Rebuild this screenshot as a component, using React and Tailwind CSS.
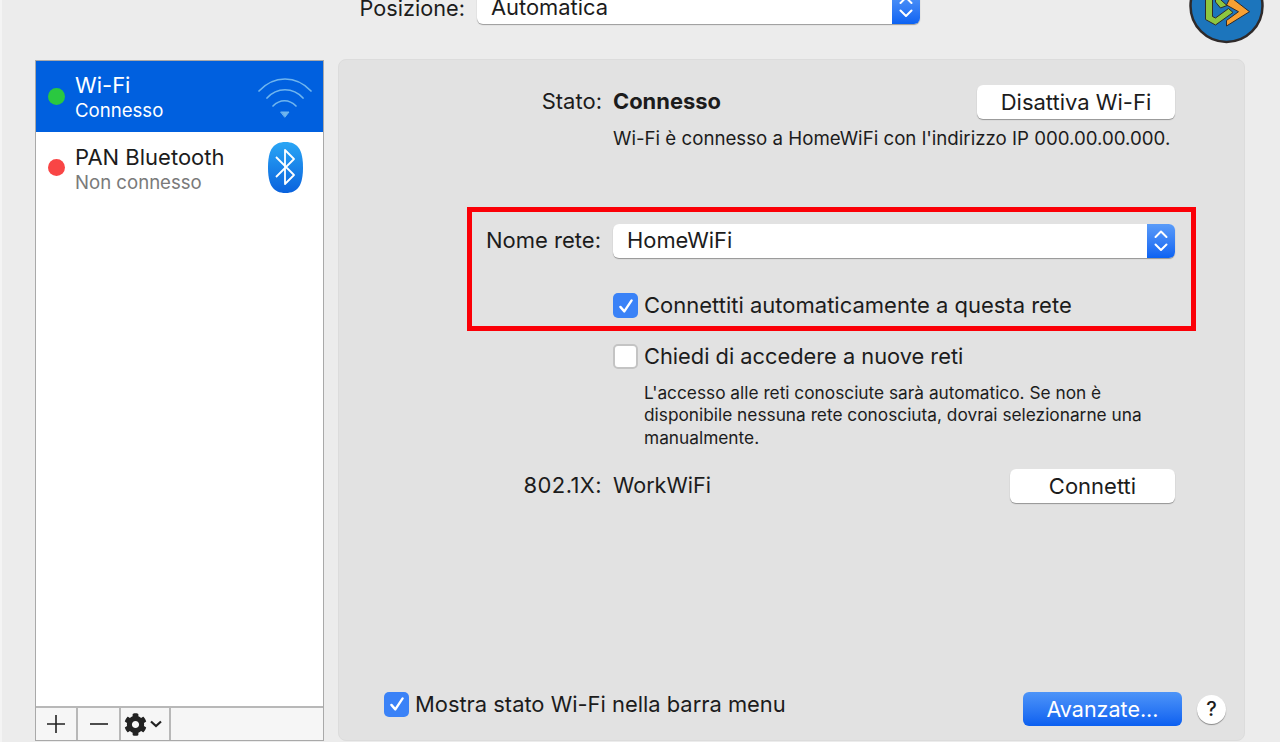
import React from "react";
import { FaCog } from "react-icons/fa";

const Check = ({ size = 18 }) => (
  <svg width={size} height={size} viewBox="0 0 16 16" fill="none">
    <path d="M3 8.8 L6.5 12.8 L13 3" stroke="#fff" strokeWidth="2.1" strokeLinecap="round" strokeLinejoin="round" />
  </svg>
);

const Checkbox = ({ checked }) =>
  checked ? (
    <div className="w-[25px] h-[25px] shrink-0 rounded-[5px] bg-[#3a82f7] flex items-center justify-center">
      <Check />
    </div>
  ) : (
    <div className="w-[25px] h-[25px] shrink-0 rounded-[5px] bg-white border-2 border-[#c4c4c4]" />
  );

const Stepper = () => (
  <div className="w-[28px] h-[34px] shrink-0 rounded-r-[6px] bg-gradient-to-b from-[#5a9bf8] to-[#0a62f2] flex items-center justify-center">
    <svg width="14" height="24" viewBox="0 0 14 24" fill="none">
      <path d="M1.5 8 L7 2.5 L12.5 8 M1.5 15.5 L7 21 L12.5 15.5" stroke="#fff" strokeWidth="2" strokeLinecap="round" strokeLinejoin="round" />
    </svg>
  </div>
);

const Select = ({ label, className = "", textClass }) => (
  <div className={`flex h-[34px] rounded-[6px] bg-white shadow-[0_1px_1px_rgba(0,0,0,0.35)] ${className}`}>
    <div className={`flex-1 flex items-center text-[21.9px] leading-[28px] text-[#1c1c1c] ${textClass}`}>{label}</div>
    <Stepper />
  </div>
);

const Button = ({ children, className }) => (
  <div className={`h-[34px] rounded-[6px] bg-white shadow-[0_1px_1px_rgba(0,0,0,0.35)] flex items-center justify-center text-[22px] leading-[28px] pb-px text-[#1c1c1c] ${className}`}>
    {children}
  </div>
);

const Logo = () => (
  <svg className="shrink-0 -mt-[31px] mr-[16px]" width="75" height="75" viewBox="1188.5 -31 75 75">
    <circle cx="1226" cy="6" r="36" fill="#1c75bc" stroke="#2f2a2a" strokeWidth="2.5" />
    <path d="M1205 -14 L1205 19.5 L1215 25 L1232.5 12.5 L1228 8.5 L1215 18 L1212 16.5 L1212 -14 Z" fill="#8dc63f" stroke="#2f2a2a" strokeWidth="1" />
    <path d="M1215 -5 L1226.5 5.5 L1220 8 L1215 2 Z" fill="#8dc63f" stroke="#2f2a2a" strokeWidth="1" />
    <path d="M1230 -3 L1249 11.7 L1226 26 L1226 20.5 L1238 11.7 L1226 5 Z" fill="#f7a032" stroke="#2f2a2a" strokeWidth="1" />
  </svg>
);

const Row = ({ label, children, labelW = "w-[263px]", labelClass = "" }) => (
  <div className="flex items-center">
    <div className={`${labelW} shrink-0 text-right text-[22px] leading-[28px] text-[#1c1c1c] pb-[2px] ${labelClass}`}>{label}</div>
    <div className="ml-[11px] flex-1 min-w-0">{children}</div>
  </div>
);

export default function App() {
  return (
    <div
      className="w-[1280px] h-[742px] overflow-hidden bg-[#ececec] border-l-2 border-[#f4f4f4] flex flex-col"
      style={{ fontFamily: "Inter, 'Liberation Sans', sans-serif" }}
    >
      <header className="h-[59px] shrink-0 flex items-start">
        <div className="w-[463px] shrink-0 text-right text-[21.7px] text-[#1c1c1c] -mt-[8px]">Posizione:</div>
        <Select label="Automatica" className="w-[443px] ml-[12px] -mt-[10px]" textClass="pl-[14px]" />
        <div className="flex-1" />
        <Logo />
      </header>

      <main className="flex-1 min-h-0 flex pl-[33px] pr-[35px] pb-px gap-[14px]">
        <aside className="w-[289px] shrink-0 flex flex-col mt-px border border-[#a9a9a9] bg-white">
          <div className="h-[71px] bg-[#0060df] flex items-center pl-[12px] pr-[11px]">
            <div className="w-[17px] h-[17px] rounded-full bg-[#2ac840]" />
            <div className="ml-[10px] flex-1">
              <div className="text-[22px] leading-[26px] text-white">Wi-Fi</div>
              <div className="text-[18.6px] leading-[24px] text-white">Connesso</div>
            </div>
            <svg width="54" height="44" viewBox="0 0 54 44" fill="none" stroke="#6fb5ee" strokeWidth="1.7" strokeLinecap="round">
              <path d="M1 16 C16 0 38 0 53 16" />
              <path d="M9 23 C19 12 35 12 45 23" />
              <path d="M15 31 C22 24 31 24 38 31" />
              <path d="M23 37 L31 37 L27 42 Z" fill="#6fb5ee" strokeWidth="1" />
            </svg>
          </div>
          <div className="h-[71px] flex items-center pl-[12px] pr-[20px]">
            <div className="w-[17px] h-[17px] rounded-full bg-[#f94545]" />
            <div className="ml-[10px] flex-1 pt-[2px]">
              <div className="text-[22px] leading-[26px] text-[#1c1c1c]">PAN Bluetooth</div>
              <div className="text-[18.6px] leading-[24px] text-[#7a7a7a]">Non connesso</div>
            </div>
            <svg width="35" height="51" viewBox="0 0 35 51" fill="none">
              <defs>
                <linearGradient id="bt" x1="0" y1="0" x2="0" y2="1">
                  <stop offset="0" stopColor="#2aa6f5" />
                  <stop offset="1" stopColor="#0a62dd" />
                </linearGradient>
              </defs>
              <path d="M17.5 0 C30 0 35 8 35 25.5 C35 43 30 51 17.5 51 C5 51 0 43 0 25.5 C0 8 5 0 17.5 0 Z" fill="url(#bt)" />
              <path d="M8 15 L26 33 L17 42 L17 8 L26 17 L8 35" stroke="#fff" strokeWidth="1.8" strokeLinejoin="round" />
            </svg>
          </div>
          <div className="flex-1" />
          <div className="h-[34px] flex border-t-2 border-[#b8b8b8] bg-[#f6f6f6]">
            <div className="w-[42px] border-r-2 border-[#b8b8b8] flex items-center justify-center">
              <svg width="20" height="20" viewBox="0 0 20 20" stroke="#222" strokeWidth="1.6"><path d="M10 1 V19 M1 10 H19" /></svg>
            </div>
            <div className="w-[43px] border-r-2 border-[#b8b8b8] flex items-center justify-center">
              <svg width="20" height="20" viewBox="0 0 20 20" stroke="#222" strokeWidth="1.6"><path d="M1 10 H19" /></svg>
            </div>
            <div className="w-[50px] border-r-2 border-[#b8b8b8] flex items-center pl-[3px] gap-[3px]">
              <FaCog size={23} color="#222" />
              <svg width="12" height="8" viewBox="0 0 12 8" fill="none" stroke="#222" strokeWidth="2.2"><path d="M1 1.5 L6 6 L11 1.5" /></svg>
            </div>
          </div>
        </aside>

        <section className="flex-1 min-w-0 rounded-[8px] bg-[#e2e2e2] border border-[#dcdcdc] flex flex-col pt-[25px]">
          <div className="pr-[69px]">
            <Row label="Stato:">
              <div className="flex items-center justify-between">
                <span className="text-[21.9px] leading-[28px] font-bold text-[#1c1c1c] pb-[2px]">Connesso</span>
                <Button className="w-[198px]">Disattiva Wi-Fi</Button>
              </div>
            </Row>
            <div className="ml-[274px] mt-[8px] text-[18.7px] leading-[24px] text-[#1c1c1c] whitespace-nowrap">
              Wi-Fi è connesso a HomeWiFi con l'indirizzo IP 000.00.00.000.
            </div>
          </div>

          <div className="ml-[128px] mr-[48px] mt-[56px] border-[5px] border-[#fb0007] h-[124px] pt-[12px] pr-[16px]">
            <Row label="Nome rete:" labelW="w-[129px]">
              <Select label="HomeWiFi" className="ml-px" textClass="pl-[14px] pb-[2px]" />
            </Row>
            <div className="ml-[141px] mt-[31px] flex items-center gap-[6px] text-[22px] text-[#1c1c1c] whitespace-nowrap">
              <Checkbox checked />
              <span>Connettiti automaticamente a questa rete</span>
            </div>
          </div>

          <div className="ml-[274px] mt-[9px] flex items-center gap-[6px] text-[21.8px] text-[#1c1c1c]">
            <Checkbox />
            <span>Chiedi di accedere a nuove reti</span>
          </div>
          <p className="ml-[305px] mr-[60px] mt-[9px] text-[17.3px] leading-[22.5px] text-[#1c1c1c]">
            L'accesso alle reti conosciute sarà automatico. Se non è<br />
            disponibile nessuna rete conosciuta, dovrai selezionarne una<br />
            manualmente.
          </p>

          <div className="pr-[69px] mt-[20px]">
            <Row label="802.1X:" labelClass="tracking-[0.4px]">
              <div className="flex items-center justify-between">
                <span className="text-[21.6px] leading-[28px] text-[#1c1c1c] pb-[2px]">WorkWiFi</span>
                <Button className="w-[165px]">Connetti</Button>
              </div>
            </Row>
          </div>

          <div className="mt-auto mb-[14px] flex items-center pl-[45px] pr-[18px]">
            <div className="flex items-center gap-[6px] text-[21.9px] text-[#1c1c1c] -mt-[9px]">
              <Checkbox checked />
              <span>Mostra stato Wi-Fi nella barra menu</span>
            </div>
            <div className="flex-1" />
            <div className="w-[159px] h-[34px] rounded-[6px] bg-gradient-to-b from-[#4d94f8] to-[#0a5ff0] flex items-center justify-center text-[21.5px] text-white">
              Avanzate...
            </div>
            <div className="ml-[15px] w-[29px] h-[29px] rounded-full bg-white shadow-[0_1px_1px_rgba(0,0,0,0.4)] flex items-center justify-center text-[20px] font-medium text-[#1c1c1c]">
              ?
            </div>
          </div>
        </section>
      </main>
    </div>
  );
}
